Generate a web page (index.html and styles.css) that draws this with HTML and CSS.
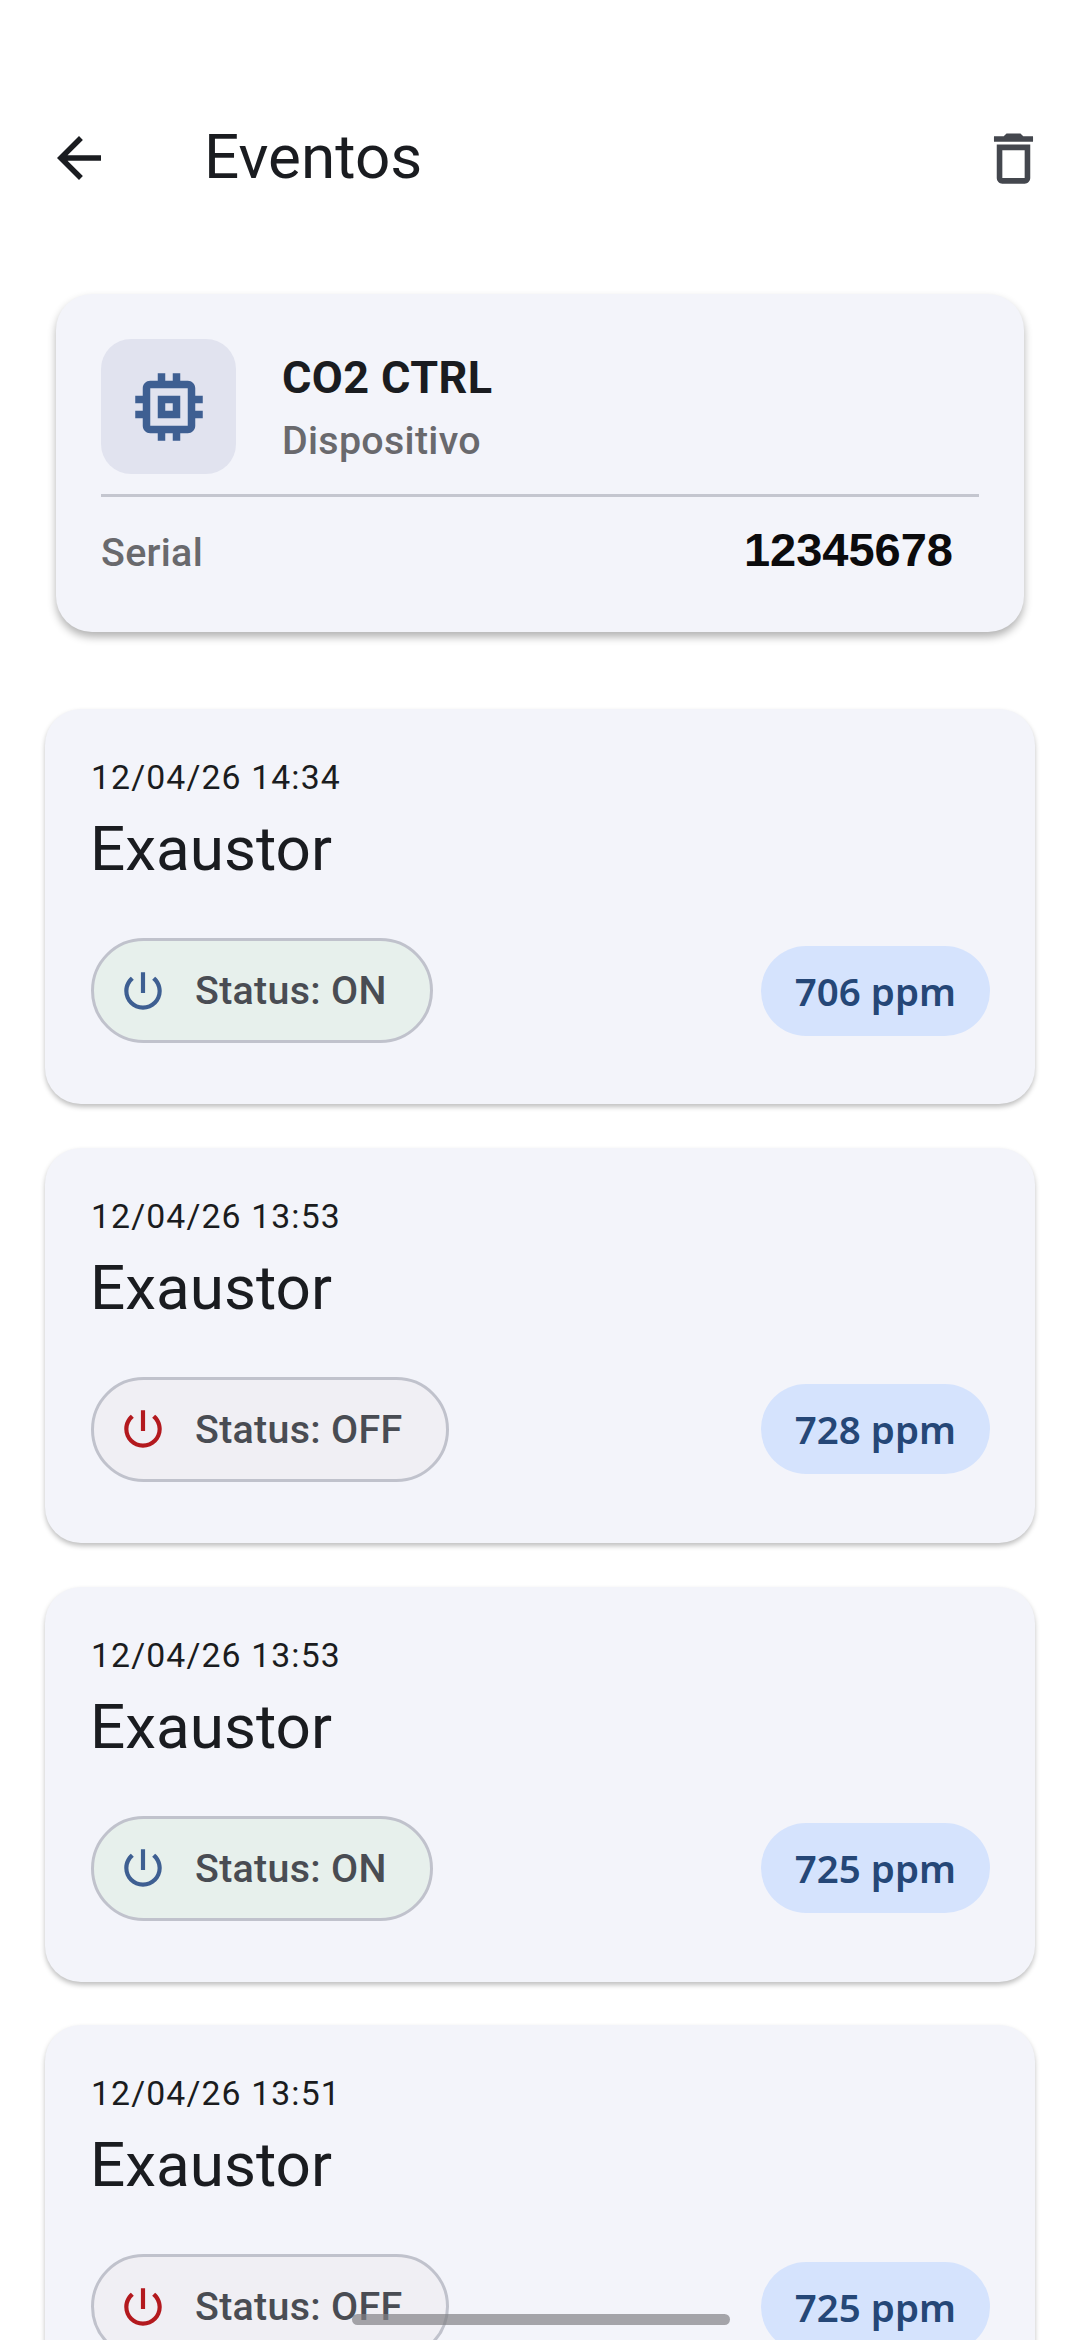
FILE: index.html
```html
<!DOCTYPE html>
<html lang="en">
<head>
    <meta charset="UTF-8">
    <meta name="viewport" content="width=device-width, initial-scale=1.0">
    <title>Eventos</title>
    <link rel="stylesheet" href="styles.css">
</head>
<body>
    <div class="screen">
        <header class="top-bar">
            <svg class="back-icon" viewBox="0 0 24 24"><path d="M20 11H7.83l5.59-5.59L12 4l-8 8 8 8 1.41-1.41L7.83 13H20v-2z"/></svg>
            <h1 class="top-title">Eventos</h1>
            <svg class="trash-icon" viewBox="0 0 24 24"><path d="M6 19c0 1.1.9 2 2 2h8c1.1 0 2-.9 2-2V7H6v12zM8 9h8v10H8V9zm7.5-5l-1-1h-5l-1 1H5v2h14V4h-3.5z"/></svg>
        </header>

        <section class="device-card">
            <div class="device-head">
                <div class="chip-box">
                    <svg class="chip-icon" viewBox="0 0 24 24"><path d="M15 9H9v6h6V9zm-2 4h-2v-2h2v2zm8-2V9h-2V7c0-1.1-.9-2-2-2h-2V3h-2v2h-2V3H9v2H7c-1.1 0-2 .9-2 2v2H3v2h2v2H3v2h2v2c0 1.1.9 2 2 2h2v2h2v-2h2v2h2v-2h2c1.1 0 2-.9 2-2v-2h2v-2h-2v-2h2zm-4 6H7V7h10v10z"/></svg>
                </div>
                <div class="device-info">
                    <div class="device-name">CO2 CTRL</div>
                    <div class="device-type">Dispositivo</div>
                </div>
            </div>
            <div class="device-serial">
                <span class="serial-label">Serial</span>
                <span class="serial-value">12345678</span>
            </div>
        </section>

        <div class="event-list">
            <article class="event-card">
                <div class="event-date">12/04/26 14:34</div>
                <div class="event-name">Exaustor</div>
                <div class="event-row">
                    <div class="status-pill on">
                        <svg class="power-icon" viewBox="0 0 24 24"><path d="M13 3h-2v10h2V3zm4.83 2.17l-1.42 1.42C17.99 7.86 19 9.81 19 12c0 3.87-3.13 7-7 7s-7-3.13-7-7c0-2.19 1.01-4.14 2.58-5.42L6.17 5.17C4.23 6.82 3 9.26 3 12c0 4.97 4.03 9 9 9s9-4.03 9-9c0-2.74-1.23-5.18-3.17-6.83z"/></svg>
                        <span>Status: ON</span>
                    </div>
                    <div class="ppm-pill">706 ppm</div>
                </div>
            </article>

            <article class="event-card">
                <div class="event-date">12/04/26 13:53</div>
                <div class="event-name">Exaustor</div>
                <div class="event-row">
                    <div class="status-pill off">
                        <svg class="power-icon" viewBox="0 0 24 24"><path d="M13 3h-2v10h2V3zm4.83 2.17l-1.42 1.42C17.99 7.86 19 9.81 19 12c0 3.87-3.13 7-7 7s-7-3.13-7-7c0-2.19 1.01-4.14 2.58-5.42L6.17 5.17C4.23 6.82 3 9.26 3 12c0 4.97 4.03 9 9 9s9-4.03 9-9c0-2.74-1.23-5.18-3.17-6.83z"/></svg>
                        <span>Status: OFF</span>
                    </div>
                    <div class="ppm-pill">728 ppm</div>
                </div>
            </article>

            <article class="event-card">
                <div class="event-date">12/04/26 13:53</div>
                <div class="event-name">Exaustor</div>
                <div class="event-row">
                    <div class="status-pill on">
                        <svg class="power-icon" viewBox="0 0 24 24"><path d="M13 3h-2v10h2V3zm4.83 2.17l-1.42 1.42C17.99 7.86 19 9.81 19 12c0 3.87-3.13 7-7 7s-7-3.13-7-7c0-2.19 1.01-4.14 2.58-5.42L6.17 5.17C4.23 6.82 3 9.26 3 12c0 4.97 4.03 9 9 9s9-4.03 9-9c0-2.74-1.23-5.18-3.17-6.83z"/></svg>
                        <span>Status: ON</span>
                    </div>
                    <div class="ppm-pill">725 ppm</div>
                </div>
            </article>

            <article class="event-card">
                <div class="event-date">12/04/26 13:51</div>
                <div class="event-name">Exaustor</div>
                <div class="event-row">
                    <div class="status-pill off">
                        <svg class="power-icon" viewBox="0 0 24 24"><path d="M13 3h-2v10h2V3zm4.83 2.17l-1.42 1.42C17.99 7.86 19 9.81 19 12c0 3.87-3.13 7-7 7s-7-3.13-7-7c0-2.19 1.01-4.14 2.58-5.42L6.17 5.17C4.23 6.82 3 9.26 3 12c0 4.97 4.03 9 9 9s9-4.03 9-9c0-2.74-1.23-5.18-3.17-6.83z"/></svg>
                        <span>Status: OFF</span>
                    </div>
                    <div class="ppm-pill">725 ppm</div>
                </div>
            </article>
        </div>

        <div class="home-handle"></div>
    </div>
</body>
</html>
```

FILE: styles.css
```css
html, body {
    margin: 0;
    padding: 0;
    background: #fff;
}
.screen {
    position: relative;
    width: 1080px;
    height: 2340px;
    overflow: hidden;
    background: #fff;
    font-family: Roboto, sans-serif;
    color: #1a1c20;
}
.top-bar {
    display: flex;
    align-items: center;
    height: 66px;
    padding: 125px 46px 0 46px;
}
.back-icon {
    width: 66px;
    height: 66px;
    fill: #1a1c20;
}
.top-title {
    flex: 1;
    margin: 0 0 2px 92px;
    font-size: 62px;
    font-weight: 400;
    line-height: 66px;
}
.trash-icon {
    width: 67px;
    height: 67px;
    margin-right: -13px;
    fill: #44474e;
}
.device-card {
    margin: 103px 56px 0 56px;
    padding: 45px 45px 0 45px;
    height: 293px;
    background: #f3f4fa;
    border-radius: 36px;
    box-shadow: 0 5px 9px rgba(0,0,0,0.3);
}
.device-head {
    display: flex;
    align-items: center;
    padding-bottom: 20px;
    border-bottom: 3px solid #c4c6cf;
}
.chip-box {
    display: flex;
    align-items: center;
    justify-content: center;
    width: 135px;
    height: 135px;
    background: #e1e3ef;
    border-radius: 30px;
}
.chip-icon {
    width: 90px;
    height: 90px;
    fill: #3e5f92;
}
.device-info {
    margin-left: 46px;
}
.device-name {
    margin-top: 3px;
    font-size: 45px;
    font-weight: 700;
    line-height: 56px;
    letter-spacing: 0.4px;
}
.device-type {
    margin-top: 10px;
    font-size: 39.4px;
    font-weight: 500;
    line-height: 50px;
    letter-spacing: 0.3px;
    color: #69696d;
}
.device-serial {
    display: flex;
    justify-content: space-between;
    align-items: baseline;
    padding: 26px 26px 0 0;
}
.serial-label {
    font-size: 39.4px;
    font-weight: 500;
    letter-spacing: 0.3px;
    line-height: 54px;
    color: #69696d;
}
.serial-value {
    font-family: "Liberation Sans", Arial, sans-serif;
    font-size: 47px;
    font-weight: 700;
    line-height: 54px;
    color: #0b0b0d;
}
.event-list {
    display: flex;
    flex-direction: column;
    gap: 43.75px;
    margin: 77px 45px 0 45px;
}
.event-card {
    flex: none;
    height: 348px;
    padding: 47px 45px 0 46px;
    background: #f3f4fa;
    border-radius: 36px;
    box-shadow: 0 3px 5px rgba(0,0,0,0.25);
}
.event-date {
    font-size: 33.75px;
    line-height: 44px;
    letter-spacing: 1.125px;
}
.event-name {
    margin: 14px 0 0 -1px;
    font-size: 62px;
    line-height: 70px;
}
.event-row {
    display: flex;
    align-items: center;
    justify-content: space-between;
    margin-top: 54px;
}
.status-pill {
    display: flex;
    align-items: center;
    height: 105px;
    box-sizing: border-box;
    padding: 0 43px 0 24px;
    border: 3px solid #c0c2cc;
    border-radius: 53px;
    font-size: 39.4px;
    font-weight: 500;
    letter-spacing: 0.3px;
    color: #494c53;
}
.status-pill.on {
    background: #e7f0ec;
}
.status-pill.off {
    background: #f0eff4;
}
.power-icon {
    width: 50px;
    height: 50px;
    margin-right: 27px;
}
.on .power-icon {
    fill: #3e5f92;
}
.off .power-icon {
    fill: #b3191e;
}
.ppm-pill {
    display: flex;
    align-items: center;
    height: 90px;
    padding: 0 34px;
    background: #d5e3fd;
    border-radius: 45px;
    font-family: "Noto Sans", sans-serif;
    font-size: 38.5px;
    font-weight: 600;
    color: #254777;
}
.home-handle {
    position: absolute;
    left: 352px;
    top: 2314px;
    width: 378px;
    height: 11px;
    border-radius: 6px;
    background: rgba(130,130,134,0.7);
}
```
